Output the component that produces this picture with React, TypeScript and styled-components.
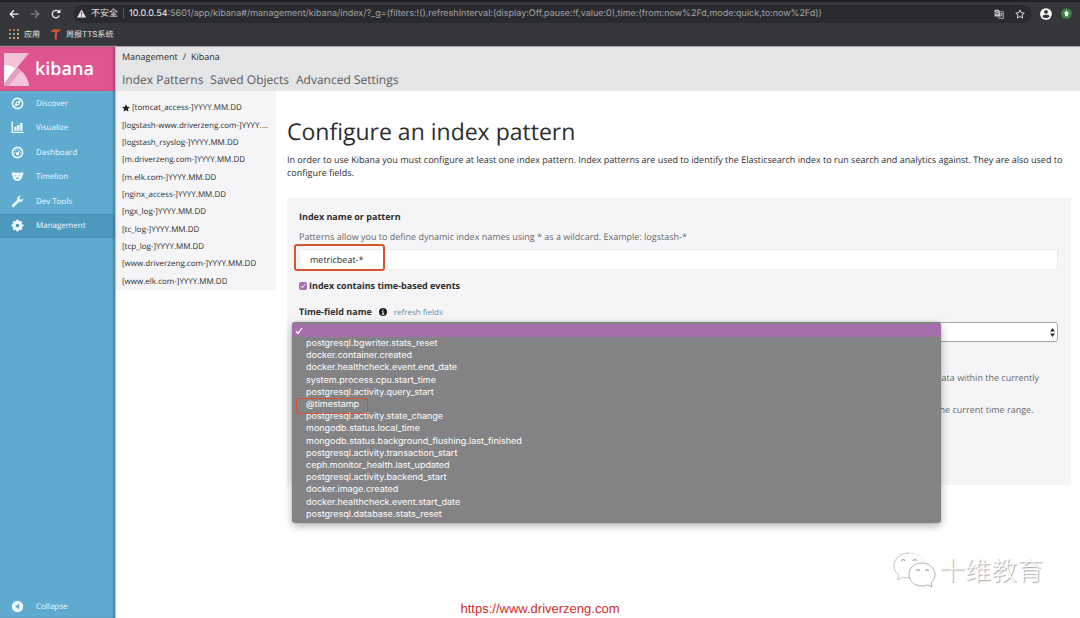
import React from 'react';
import styled, { createGlobalStyle, css } from 'styled-components';

const GlobalStyle = createGlobalStyle`
  *, *::before, *::after { box-sizing: border-box; }
  html, body { margin: 0; padding: 0; }
  body {
    background: #fff;
    color: #2d2d2d;
    font-family: "Open Sans", "Noto Sans CJK SC", sans-serif;
    font-size: 9px;
    text-rendering: geometricPrecision;
  }
  button, input, select { font: inherit; color: inherit; margin: 0; text-rendering: inherit; }
  a { color: inherit; text-decoration: none; }
  ul, h1, p { margin: 0; padding: 0; }
  ul { list-style: none; }
`;

const Page = styled.div`
  position: relative;
  min-height: 100vh;
  display: flex;
  flex-direction: column;
  overflow: hidden;
`;

/* ---------- browser chrome ---------- */
const Chrome = styled.header`
  background: #36373a;
  border-top: 2px solid #202124;
  height: 46px;
  color: #e4e5e7;
  font-family: Inter, "Noto Sans CJK SC", sans-serif;
`;

const Toolbar = styled.div`
  display: flex;
  align-items: center;
  height: 23px;
  padding: 0 8px 0 9px;
`;

const ToolButton = styled.button<{ $gap?: number; $dim?: boolean }>`
  display: flex;
  padding: 0;
  border: 0;
  background: none;
  color: ${p => (p.$dim ? '#808184' : '#f1f1f2')};
  margin-right: ${p => p.$gap ?? 0}px;
`;

const AddressBar = styled.div`
  flex: 1;
  min-width: 0;
  display: flex;
  align-items: center;
  height: 18px;
  margin-right: 8px;
  padding: 0 7px 0 4px;
  border-radius: 9px;
  background: #2a2b2e;
`;

const Insecure = styled.span`
  margin: 0 5px 0 5px;
  padding-right: 5px;
  line-height: 11px;
  border-right: 1px solid #57585b;
`;

const Url = styled.a`
  flex: 1;
  min-width: 0;
  overflow: hidden;
  white-space: nowrap;
  font-size: 9px;
  line-height: 14px;
  color: #a3a4a7;
  b { font-weight: 400; color: #f5f5f5; }
`;

const Bookmarks = styled.nav`
  display: flex;
  align-items: center;
  height: 18px;
  padding-left: 9px;
  font-size: 8px;
`;

const Bookmark = styled.a`
  display: flex;
  align-items: center;
  gap: 5px;
  margin-right: 11px;
  line-height: 12px;
`;

/* ---------- kibana shell ---------- */
const Shell = styled.div`
  flex: 1;
  display: flex;
`;

const Sidebar = styled.aside`
  position: relative;
  z-index: 1;
  flex: 0 0 115px;
  display: flex;
  flex-direction: column;
  background: #5fabd0;
  color: #eef9ff;
  box-shadow: inset -2px 0 2px #4a88a6, 1px 0 1px #b9c4c9;
`;

const Brand = styled.a`
  display: flex;
  align-items: center;
  gap: 6px;
  height: 45px;
  padding-left: 4px;
  background: #de5590;
  border-top: 1px solid #a5848f;
  color: #fff;
  font-size: 18px;
  font-weight: 600;
  line-height: 24px;
  box-shadow: inset -2px 0 2px #b04473;
`;

const SideNav = styled.nav`
  display: flex;
  flex-direction: column;
  height: 147px;
`;

const SideLink = styled.a<{ $active?: boolean }>`
  flex: 1;
  display: flex;
  align-items: center;
  gap: 12px;
  padding-left: 11px;
  font-size: 8px;
  background: ${p => (p.$active ? '#4d98bd' : 'transparent')};
  box-shadow: ${p => (p.$active ? 'inset -2px 0 2px #3f7d9c' : 'none')};
`;

const Collapse = styled.button`
  display: flex;
  align-items: center;
  gap: 12px;
  height: 24px;
  margin-top: auto;
  padding: 0 0 0 11px;
  border: 0;
  background: none;
  font-size: 8px;
`;

const Main = styled.main`
  flex: 1;
  min-width: 0;
`;

const TopNav = styled.header`
  height: 45px;
  padding: 3px 7px 0;
  border-top: 1px solid #a4a5a7;
  background: #e4e5e6;
`;

const Crumbs = styled.nav`
  display: flex;
  gap: 5px;
  font-size: 9px;
  line-height: 13px;
`;

const Tabs = styled.nav`
  display: flex;
  gap: 7px;
  padding-top: 8px;
  font-size: 12px;
  line-height: 18px;
  color: #595a5b;
`;

const Body = styled.div`
  display: flex;
  align-items: flex-start;
`;

const PatternPanel = styled.aside`
  flex: 0 0 161px;
  padding: 8px 8px 0 7px;
  background: #f5f5f7;
`;

const PatternList = styled.ul`
  display: grid;
  grid-auto-rows: 1fr;
  height: 191px;
  font-size: 8px;
`;

const PatternItem = styled.li`
  display: flex;
  align-items: center;
  gap: 2px;
  min-width: 0;
  a {
    overflow: hidden;
    white-space: nowrap;
    text-overflow: ellipsis;
  }
`;

const Content = styled.section`
  flex: 1;
  min-width: 0;
  padding: 24px 9px 0 11px;
`;

const Title = styled.h1`
  font-size: 23px;
  font-weight: 400;
  line-height: 32px;
`;

const Intro = styled.p`
  padding: 6px 0 0;
  font-size: 9px;
  line-height: 13px;
`;

const FormPanel = styled.form`
  height: 287px;
  margin-top: 19px;
  padding: 12px 13px 0 12px;
  background: #f5f5f7;
`;

const Label = styled.label`
  font-size: 9px;
  font-weight: 700;
  line-height: 14px;
`;

const Block = styled.div`
  position: relative;
`;

const Row = styled.div<{ $top: number; $gap: number }>`
  display: flex;
  align-items: center;
  gap: ${p => p.$gap}px;
  height: 14px;
  margin-top: ${p => p.$top}px;
`;

const Help = styled.p<{ $top: number }>`
  margin-top: ${p => p.$top}px;
  font-size: 9px;
  line-height: 14px;
  color: #67686a;
`;

const TextInput = styled.input`
  display: block;
  width: 100%;
  height: 21px;
  margin-top: 5px;
  padding: 0 10px;
  border: 1px solid #ececee;
  border-radius: 2px;
  background: #fff;
  font-size: 9px;
`;

const Mark = styled.span<{ $kind: 'input' | 'option' }>`
  position: absolute;
  pointer-events: none;
  border: 2px solid #d9532f;
  ${p =>
    p.$kind === 'input'
      ? css`left: -5px; top: -5px; width: 91px; height: 27px; border-radius: 3px;`
      : css`left: 4px; top: -1px; width: 72px; height: 16px; border-width: 1px; border-radius: 2px;`}
`;

const Tick = styled.input`
  appearance: none;
  width: 8px;
  height: 8px;
  border-radius: 2px;
  background: #a86fae url("data:image/svg+xml,%3Csvg xmlns='http://www.w3.org/2000/svg' viewBox='0 0 8 8'%3E%3Cpath d='M1.8 4.2l1.6 1.6 2.8-3.8' fill='none' stroke='white'/%3E%3C/svg%3E");
`;

const Refresh = styled.a`
  font-size: 8px;
  color: #4f8fae;
`;

const SelectWrap = styled.div`
  position: relative;
  margin-top: 3px;
`;

const FieldSelect = styled.select`
  appearance: none;
  display: block;
  width: 100%;
  height: 20px;
  border: 1px solid #a5a6a8;
  border-radius: 3px;
  background: #fff;
`;

const Arrows = styled.svg`
  position: absolute;
  right: 3px;
  top: 6px;
`;

const Popup = styled.div`
  position: absolute;
  z-index: 2;
  left: -7px;
  top: 0;
  width: 85.5%;
  padding: 2px 0;
  border-radius: 4px;
  background: #838385;
  box-shadow: 0 0 1px #666, 0 3px 8px rgba(0, 0, 0, 0.3);
  font-family: Inter, "Liberation Sans", sans-serif;
  font-size: 9px;
  color: #fff;
`;

const Chosen = styled.div`
  display: flex;
  align-items: center;
  height: 13px;
  padding-left: 3px;
  background: #a66fab;
`;

const Options = styled.ul`
  display: grid;
  grid-auto-rows: 1fr;
  height: 183px;
  margin-top: 1px;
`;

const Option = styled.li`
  position: relative;
  display: flex;
  align-items: center;
  padding-left: 14px;
  line-height: 12px;
`;

const SiteUrl = styled.a`
  position: absolute;
  bottom: 1px;
  left: 0;
  right: 0;
  text-align: center;
  font: 13px/16px "Liberation Sans", Arial, sans-serif;
  color: #cf2a27;
  z-index: 0;
`;

const Watermark = styled.div`
  position: absolute;
  right: 37px;
  bottom: 29px;
  display: flex;
  align-items: center;
  gap: 3px;
  font: 300 26px/38px "Noto Sans CJK SC", sans-serif;
  color: #fff;
  text-shadow: 1px 1px 1px #a0a0a0;
`;

const patterns = [
  '[tomcat_access-]YYYY.MM.DD',
  '[logstash-www.driverzeng.com-]YYYY.MM.DD',
  '[logstash_rsyslog-]YYYY.MM.DD',
  '[m.driverzeng.com-]YYYY.MM.DD',
  '[m.elk.com-]YYYY.MM.DD',
  '[nginx_access-]YYYY.MM.DD',
  '[ngx_log-]YYYY.MM.DD',
  '[tc_log-]YYYY.MM.DD',
  '[tcp_log-]YYYY.MM.DD',
  '[www.driverzeng.com-]YYYY.MM.DD',
  '[www.elk.com-]YYYY.MM.DD',
];

const fields = [
  'postgresql.bgwriter.stats_reset',
  'docker.container.created',
  'docker.healthcheck.event.end_date',
  'system.process.cpu.start_time',
  'postgresql.activity.query_start',
  '@timestamp',
  'postgresql.activity.state_change',
  'mongodb.status.local_time',
  'mongodb.status.background_flushing.last_finished',
  'postgresql.activity.transaction_start',
  'ceph.monitor_health.last_updated',
  'postgresql.activity.backend_start',
  'docker.image.created',
  'docker.healthcheck.event.start_date',
  'postgresql.database.stats_reset',
];

const Icon = ({ size = 13, box = 16, children }: { size?: number; box?: number; children: React.ReactNode }) => (
  <svg width={size} height={size} viewBox={`0 0 ${box} ${box}`} fill="none" stroke="currentColor" strokeWidth="1.6" aria-hidden="true">
    {children}
  </svg>
);

const teeth = [0, 45, 90, 135, 180, 225, 270, 315];
const appColors = ['#c96a5c', '#c96a5c', '#c98a5c', '#7fa86a', '#7d9bbd', '#c9a55c', '#7fa86a', '#c9a55c', '#c9a55c'];

const navItems: { label: string; icon: React.ReactNode }[] = [
  {
    label: 'Discover',
    icon: (
      <Icon>
        <circle cx="8" cy="8" r="6.3" strokeWidth="1.9" />
        <path d="M12 4L9.800 9.800 4 12l2.200-5.800z" fill="currentColor" stroke="none" />
        <circle cx="8" cy="8" r="1.200" fill="#5fabd0" stroke="none" />
      </Icon>
    ),
  },
  {
    label: 'Visualize',
    icon: (
      <Icon>
        <path d="M1.500 1v13H15.500" strokeWidth="1.800" />
        <path d="M5.500 12V7M9 12V5M12.700 12V2.500" strokeWidth="2.800" />
      </Icon>
    ),
  },
  {
    label: 'Dashboard',
    icon: (
      <Icon>
        <circle cx="8" cy="8" r="6.300" strokeWidth="1.900" />
        <circle cx="8" cy="9.500" r="2" fill="currentColor" stroke="none" />
        <path d="M8 9.500l3-4M3.800 8.500h1.400M5 5l1 1M8 3.600v1.400M11 8.500h1.200" strokeWidth="1.400" />
      </Icon>
    ),
  },
  {
    label: 'Timelion',
    icon: (
      <Icon>
        <path d="M1 3c1.200-.6 2.600-.4 3.500.4h7C12.400 2.600 13.800 2.400 15 3c.4 1.700.1 3.200-1 4.200C14 11 11.500 13.500 8 13.500S2 11 2 7.200C.9 6.200.6 4.700 1 3z" fill="currentColor" stroke="none" />
        <path d="M5.800 6.300v1.400M10.200 6.300v1.400M6.200 10.500h3.600M8 9v1.500" stroke="#5fabd0" strokeWidth="1.200" />
      </Icon>
    ),
  },
  {
    label: 'Dev Tools',
    icon: (
      <Icon>
        <path d="M15 4.300l-2.400 1.500-2-1V2.600L12.800 1C10 .2 7.400 2.200 7.600 5.100c0 .5.1.8.2 1.200L1.500 12c-1.500 1.600.8 4 2.500 2.500l5.700-6.200c3 .8 5.600-1.300 5.300-4z" fill="currentColor" stroke="none" />
      </Icon>
    ),
  },
  {
    label: 'Management',
    icon: (
      <Icon>
        <circle cx="8" cy="8" r="4" strokeWidth="3.400" />
        {teeth.map(a => (
          <path key={a} d="M8 3.500V.8" strokeWidth="3" transform={`rotate(${a} 8 8)`} />
        ))}
      </Icon>
    ),
  },
];

export default function App() {
  return (
    <Page>
      <GlobalStyle />
      <Chrome>
        <Toolbar>
          <ToolButton aria-label="Back" $gap={11}>
            <Icon size={10}><path d="M15 8H2M8 2L2 8l6 6" strokeWidth="2" /></Icon>
          </ToolButton>
          <ToolButton aria-label="Forward" $dim $gap={11}>
            <Icon size={10}><path d="M1 8h13M8 2l6 6-6 6" strokeWidth="2" /></Icon>
          </ToolButton>
          <ToolButton aria-label="Reload" $gap={12}>
            <Icon size={10}>
              <path d="M13.500 10.500A6 6 0 1 1 12.500 4" strokeWidth="2" />
              <path d="M15 .5v6H9z" fill="currentColor" stroke="none" />
            </Icon>
          </ToolButton>
          <AddressBar>
            <Icon size={9}>
              <path d="M8 1l8 14H0z" fill="currentColor" stroke="none" />
              <path d="M8 6v4M8 11.500v2" stroke="#2a2b2e" />
            </Icon>
            <Insecure>不安全</Insecure>
            <Url href="#">
              <b>10.0.0.54</b>:5601/app/kibana#/management/kibana/index/?_g=(filters:!(),refreshInterval:(display:Off,pause:!f,value:0),time:(from:now%2Fd,mode:quick,to:now%2Fd))
            </Url>
            <ToolButton aria-label="Translate" $gap={11}>
              <Icon size={10}>
                <path d="M1 1h7l3 11H1z" fill="#c9cacc" stroke="none" />
                <path d="M7.500 4.500H15V15H8l-1-3" stroke="#c9cacc" strokeWidth="1.200" />
                <path d="M6.800 5A2.200 2.200 0 1 0 7 7H5" stroke="#2a2b2e" strokeWidth="1.100" />
                <path d="M10 7.500h4M12 6.500v1M13.300 7.500c-.3 2-1.500 3.500-2.600 4.200M11 8.500c.5 1.500 1.500 2.500 2.500 3" stroke="#c9cacc" strokeWidth="1" />
              </Icon>
            </ToolButton>
            <ToolButton aria-label="Bookmark this page">
              <Icon size={10}>
                <path d="M8 1.500l2 4.500 4.800.5-3.600 3.200 1 4.800L8 12l-4.200 2.500 1-4.800L1.200 6.500 6 6z" strokeWidth="1.400" />
              </Icon>
            </ToolButton>
          </AddressBar>
          <ToolButton aria-label="Profile" $gap={9}>
            <Icon size={12}>
              <circle cx="8" cy="8" r="7.800" fill="#fff" stroke="none" />
              <circle cx="8" cy="5.300" r="2.500" fill="#36373a" stroke="none" />
              <path d="M3 11c1.500-2.600 8.500-2.600 10 0-2 3.300-8 3.300-10 0z" fill="#36373a" stroke="none" />
            </Icon>
          </ToolButton>
          <ToolButton aria-label="Update browser">
            <Icon size={11}>
              <circle cx="8" cy="8" r="7.800" fill="#3c8443" stroke="none" />
              <path d="M8 3.500l4 4.500h-2v4H6V8H4z" fill="#fff" stroke="none" />
            </Icon>
          </ToolButton>
        </Toolbar>
        <Bookmarks>
          <Bookmark href="#">
            <svg width="10" height="10" viewBox="0 0 10 10" aria-hidden="true">
              {appColors.map((c, i) => (
                <rect key={i} x={(i % 3) * 4} y={Math.floor(i / 3) * 4} width="2" height="2" fill={c} />
              ))}
            </svg>
            应用
          </Bookmark>
          <Bookmark href="#">
            <svg width="10" height="11" viewBox="0 0 10 11" aria-hidden="true">
              <path d="M0 3C1 .5 3 0 5 .6L9.500 0 8.500 2.500 6 3l-.2 7.500H3.500L4 3z" fill="#d2553c" />
            </svg>
            周报TTS系统
          </Bookmark>
        </Bookmarks>
      </Chrome>

      <Shell>
        <Sidebar>
          <Brand href="#">
            <svg width="25" height="33" viewBox="0 0 25 33" aria-hidden="true">
              <path d="M0 0h25L12 16 0 30z" fill="#f5c3d8" />
              <path d="M0 12c5 0 9 1.500 13 4L0 32z" fill="#fff" />
              <path d="M13 15c7 4 11 10 12 18H0v-1z" fill="#f5c3d8" />
              <path d="M12 15l5 3.500L4 33H0v-2.500z" fill="#e3a0bd" />
            </svg>
            kibana
          </Brand>
          <SideNav>
            {navItems.map(item => (
              <SideLink key={item.label} href="#" $active={item.label === 'Management'}>
                {item.icon}
                {item.label}
              </SideLink>
            ))}
          </SideNav>
          <Collapse>
            <Icon>
              <circle cx="8" cy="8" r="7" fill="currentColor" stroke="none" />
              <path d="M10 4.500v7L5 8z" fill="#5fabd0" stroke="none" />
            </Icon>
            Collapse
          </Collapse>
        </Sidebar>

        <Main>
          <TopNav>
            <Crumbs>
              <a href="#">Management</a>
              <span>/</span>
              <a href="#">Kibana</a>
            </Crumbs>
            <Tabs>
              <a href="#">Index Patterns</a>
              <a href="#">Saved Objects</a>
              <a href="#">Advanced Settings</a>
            </Tabs>
          </TopNav>
          <Body>
            <PatternPanel>
              <PatternList>
                {patterns.map((p, i) => (
                  <PatternItem key={p}>
                    {i === 0 && (
                      <svg width="8" height="8" viewBox="0 0 16 16" aria-hidden="true">
                        <path d="M8 .5l2.300 5 5.500.6-4.100 3.700 1.100 5.400L8 12.500l-4.800 2.700 1.100-5.400L.2 6.100l5.500-.6z" fill="#1d1d1d" />
                      </svg>
                    )}
                    <a href="#">{p}</a>
                  </PatternItem>
                ))}
              </PatternList>
            </PatternPanel>
            <Content>
              <Title>Configure an index pattern</Title>
              <Intro>
                In order to use Kibana you must configure at least one index pattern. Index patterns are used to identify the
                Elasticsearch index to run search and analytics against. They are also used to configure fields.
              </Intro>
              <FormPanel>
                <Row $top={0} $gap={0}>
                  <Label htmlFor="pattern">Index name or pattern</Label>
                </Row>
                <Help $top={6}>
                  Patterns allow you to define dynamic index names using * as a wildcard. Example: logstash-*
                </Help>
                <Block>
                  <TextInput id="pattern" defaultValue="metricbeat-*" />
                  <Mark $kind="input" />
                </Block>
                <Row $top={9} $gap={2}>
                  <Tick id="timed" type="checkbox" defaultChecked />
                  <Label htmlFor="timed">Index contains time-based events</Label>
                </Row>
                <Row $top={12} $gap={7}>
                  <Label htmlFor="field">Time-field name</Label>
                  <Icon size={8}>
                    <circle cx="8" cy="8" r="8" fill="#1d1d1d" stroke="none" />
                    <path d="M8 2.500v2.500M6 7h2v5.500M5.500 12.500h5" stroke="#fff" strokeWidth="2" />
                  </Icon>
                  <Refresh href="#">refresh fields</Refresh>
                </Row>
                <SelectWrap>
                  <FieldSelect id="field" defaultValue="">
                    <option value="" />
                  </FieldSelect>
                  <Arrows width="5" height="9" viewBox="0 0 5 9" aria-hidden="true">
                    <path d="M2.500 0L5 3.500H0zM2.500 9L0 5.500h5z" fill="#2b2b2b" />
                  </Arrows>
                  <Popup>
                    <Chosen>
                      <Icon size={8}><path d="M2 8.500L6 13l8-11" strokeWidth="2.400" /></Icon>
                    </Chosen>
                    <Options role="listbox" aria-label="Time-field name">
                      {fields.map(f => (
                        <Option key={f} role="option" aria-selected={false}>
                          {f}
                          {f === '@timestamp' && <Mark $kind="option" />}
                        </Option>
                      ))}
                    </Options>
                  </Popup>
                </SelectWrap>
                <Help $top={29}>
                  By default, searches against any time-based index pattern that contains a wildcard will automatically be
                  expanded to query only the indices that contain data within the currently selected time range.
                </Help>
                <Help $top={4}>
                  Searching against the index pattern logstash-* will actually query Elasticsearch for the specific matching
                  indices (e.g. logstash-2015.12.21) that fall within the current time range.
                </Help>
              </FormPanel>
            </Content>
          </Body>
        </Main>
      </Shell>

      <Watermark>
        <svg width="43" height="36" viewBox="0 0 43 36" fill="#fff" stroke="#c4c4c4" strokeWidth="1" aria-hidden="true">
          <path d="M16 1C7 1 1 7 1 14c0 4 2 7 5 9l-1.500 5 5.500-3c2 .7 5 1 7 .7" />
          <path d="M29 11c-8 0-13 5-13 11.500S21 34 29 34c2 0 4-.4 5.500-1l4.500 2-1-4c2.500-2 4-5 4-8.500C42 16 36 11 29 11z" stroke="#b0b0b0" />
          <path d="M8.500 9c.5-2 3-2 3.500 0M20 9c.5-2 3-2 3.500 0M23.500 19c.5-2 2.500-2 3 0M32.500 19c.5-2 2.500-2 3 0" stroke="#a0a0a0" strokeWidth="1.200" />
          <path d="M16 1c7 0 13 3 14.500 9.500" stroke="#ececec" />
        </svg>
        十维教育
      </Watermark>
      <SiteUrl href="https://www.driverzeng.com">https://www.driverzeng.com</SiteUrl>
    </Page>
  );
}
